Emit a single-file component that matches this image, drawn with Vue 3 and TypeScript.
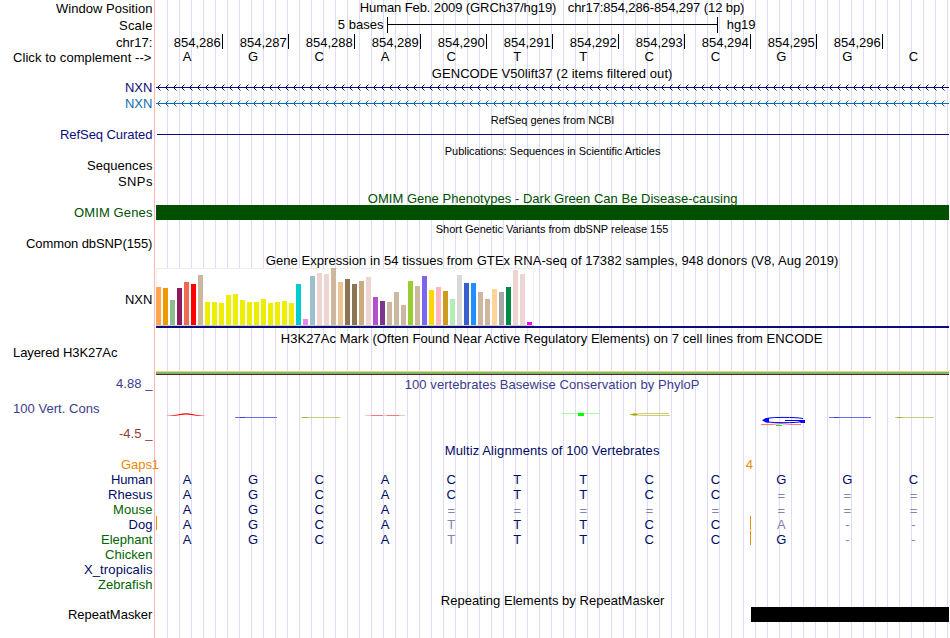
<script setup lang="ts">
interface Label { text: string; left: number; right: number; base: number; color?: string; small?: boolean }
interface Row { id: string; height: number; labels?: Label[]; titles?: Label[] }
interface PlacedRow extends Row { top: number }

const NAVY = '#0c0c78'
const ALIGN = '#000a64'
const GREEN = '#006400'
const CONS = '#3c3c8c'
const OMIM = '#005000'
const GAP = '#e68a0a'

const l = (text: string, left: number, right: number, base: number, color = '#000', small = false): Label =>
  ({ text, left, right, base, color, small })

const rows: Row[] = [
  { id: 'position', height: 16, labels: [l('Window Position', 56, 152, 13)], titles: [l('Human Feb. 2009 (GRCh37/hg19)', 360, 556, 12), l('chr17:854,286-854,297 (12 bp)', 568, 744, 12)] },
  { id: 'scale', height: 17, labels: [l('Scale', 119, 152, 30)], titles: [l('5 bases', 338, 383, 29), l('hg19', 727, 755, 29)] },
  { id: 'ruler', height: 17, labels: [l('chr17:', 116, 152, 47)] },
  { id: 'bases', height: 15, labels: [l('Click to complement -->', 13, 151, 62)] },
  { id: 'gencode-title', height: 15, titles: [l('GENCODE V50lift37 (2 items filtered out)', 432, 672, 78)] },
  { id: 'gene-a', height: 16, labels: [l('NXN', 125, 152, 92, NAVY)] },
  { id: 'gene-b', height: 16, labels: [l('NXN', 125, 152, 108, '#0e6eb4')] },
  { id: 'refseq-title', height: 15, titles: [l('RefSeq genes from NCBI', 491, 614, 124, '#000', true)] },
  { id: 'refseq', height: 16, labels: [l('RefSeq Curated', 60, 152, 139, NAVY)] },
  { id: 'pubs-title', height: 15, titles: [l('Publications: Sequences in Scientific Articles', 445, 660, 155, '#000', true)] },
  { id: 'sequences', height: 16, labels: [l('Sequences', 87, 152, 170)] },
  { id: 'snps', height: 16, labels: [l('SNPs', 118, 152, 186)] },
  { id: 'omim-title', height: 15, titles: [l('OMIM Gene Phenotypes - Dark Green Can Be Disease-causing', 368, 737, 203, OMIM)] },
  { id: 'omim', height: 15, labels: [l('OMIM Genes', 74, 152, 217, OMIM)] },
  { id: 'dbsnp-title', height: 16, titles: [l('Short Genetic Variants from dbSNP release 155', 436, 668, 233, '#000', true)] },
  { id: 'dbsnp', height: 16, labels: [l('Common dbSNP(155)', 26, 152, 248)] },
  { id: 'gtex-title', height: 16, titles: [l('Gene Expression in 54 tissues from GTEx RNA-seq of 17382 samples, 948 donors (V8, Aug 2019)', 266, 838, 265)] },
  { id: 'gtex', height: 62, labels: [l('NXN', 125, 152, 304)] },
  { id: 'h3k-title', height: 16, titles: [l('H3K27Ac Mark (Often Found Near Active Regulatory Elements) on 7 cell lines from ENCODE', 281, 822, 343)] },
  { id: 'h3k', height: 30, labels: [l('Layered H3K27Ac', 13, 117, 357)] },
  { id: 'cons-title', height: 16, labels: [l('4.88 _', 116, 152, 388, CONS)], titles: [l('100 vertebrates Basewise Conservation by PhyloP', 405, 699, 389, CONS)] },
  { id: 'cons', height: 50, labels: [l('100 Vert. Cons', 13, 99, 413, CONS), l('-4.5 _', 119, 152, 438, '#8c3c3c')] },
  { id: 'multiz-title', height: 16, titles: [l('Multiz Alignments of 100 Vertebrates', 445, 659, 455, ALIGN)] },
  { id: 'gaps', height: 14, labels: [l('Gaps', 121, 151.5, 469, GAP)] },
  { id: 'human', height: 15, labels: [l('Human', 111, 152, 484, ALIGN)] },
  { id: 'rhesus', height: 15, labels: [l('Rhesus', 108, 152, 499, ALIGN)] },
  { id: 'mouse', height: 15, labels: [l('Mouse', 113, 152, 514, GREEN)] },
  { id: 'dog', height: 15, labels: [l('Dog', 128.5, 152, 529, ALIGN)] },
  { id: 'elephant', height: 15, labels: [l('Elephant', 101, 152, 544, GREEN)] },
  { id: 'chicken', height: 15, labels: [l('Chicken', 105, 152, 559, GREEN)] },
  { id: 'xtropicalis', height: 15, labels: [l('X_tropicalis', 84, 152, 574, ALIGN)] },
  { id: 'zebrafish', height: 15, labels: [l('Zebrafish', 98, 152, 589, GREEN)] },
  { id: 'rmsk-title', height: 15, titles: [l('Repeating Elements by RepeatMasker', 441, 664, 605)] },
  { id: 'rmsk', height: 31, labels: [l('RepeatMasker', 68, 152, 619)] },
]

let cursor = 0
const placed: PlacedRow[] = rows.map((row) => {
  const top = cursor
  cursor += row.height
  return { ...row, top }
})

const bases = 'AGCACTTCCGGC'.split('')
const alignments: Record<string, string> = {
  human: 'AGCACTTCCGGC',
  rhesus: 'AGCACTTCC===',
  mouse: 'AGCA========',
  dog: 'AGCAtTTCCa--',
  elephant: 'AGCAtTTCCG--',
}
const centre = (i: number): number => 187.1 + 66.03 * i
const isMatch = (ch: string): boolean => /[A-Z]/.test(ch)
const ticks = Array.from({ length: 11 }, (_, i) => ({ x: 222 + 66 * i, text: `854,${286 + i}` }))

const arrows = (y: number): string =>
  Array.from({ length: 99 }, (_, i) => {
    const x = 157.5 + 8 * i
    return `M${x + 3} ${y - 3}L${x} ${y}L${x + 3} ${y + 3}`
  }).join('')

const heights = [
  38, 37, 25, 37, 43, 41, 50, 23, 23, 22, 30, 31, 25, 23, 23, 26, 22, 23, 24, 22, 41, 6, 49, 52, 51, 57, 43,
  46, 41, 44, 48, 28, 24, 23, 33, 20, 44, 39, 49, 35, 38, 34, 26, 50, 42, 42, 33, 26, 36, 33, 38, 55, 51, 3,
]
const colors = [
  '#ffa54f', '#ee9a00', '#8fbc8f', '#8b1c62', '#ee6a50', '#ff0000', '#cdb79e',
  ...Array<string>(13).fill('#eeee00'),
  '#00cdcd', '#ee82ee', '#9ac0cd', '#eed5d2', '#eed5d2', '#cdb79e', '#eec591', '#8b7355', '#8b7355', '#cdaa7d',
  '#eed5d2', '#b452cd', '#7a378b', '#cdb79e', '#cdb79e', '#cdb79e', '#9acd32', '#cdb79e', '#7a67ee', '#ffd700',
  '#ffb6c1', '#cd9b1d', '#b4eeb4', '#d9d9d9', '#3a5fcd', '#1e90ff', '#cdb79e', '#cdb79e', '#ffd39b', '#a6a6a6',
  '#008b45', '#eed5d2', '#eed5d2', '#ff00ff',
]
const tissues = heights.map((h, i) => ({ x: 156 + 7 * i, h, color: colors[i] }))
</script>

<template>
  <main class="browser">
    <section v-for="row in placed" :key="row.id" class="row">
      <svg class="side" width="155" :height="row.height" :viewBox="`0 ${row.top} 155 ${row.height}`">
        <text
          v-for="t in row.labels" :key="t.text" :x="t.left" :y="t.base" :fill="t.color"
          :textLength="t.right - t.left + 0.4"
        >{{ t.text }}</text>
      </svg>
      <svg class="track" width="794" :height="row.height" :viewBox="`155 ${row.top} 794 ${row.height}`">
        <g v-if="row.id === 'scale'" class="crisp">
          <rect x="387" y="17" width="1" height="16" />
          <rect x="717" y="17" width="1" height="16" />
          <rect x="387" y="24" width="331" height="1" />
        </g>

        <g v-else-if="row.id === 'ruler'">
          <template v-for="t in ticks" :key="t.x">
            <text :x="t.x - 48.3" y="47" textLength="47">{{ t.text }}</text>
            <rect class="crisp" :x="t.x" y="34" width="1" height="15" />
          </template>
        </g>

        <g v-else-if="row.id === 'bases'" class="letters">
          <text v-for="(b, i) in bases" :key="i" :x="centre(i)" y="61">{{ b }}</text>
        </g>

        <g v-else-if="row.id === 'gene-a'" class="gene gene-dark">
          <path class="crisp" d="M156 87.5H949" />
          <path :d="arrows(87.5)" />
        </g>

        <g v-else-if="row.id === 'gene-b'" class="gene gene-light">
          <path class="crisp" d="M156 103.5H949" />
          <path :d="arrows(103.5)" />
        </g>

        <rect v-else-if="row.id === 'refseq'" x="157" y="134" width="792" height="1" fill="#0c0c78" />
        <rect v-else-if="row.id === 'omim'" x="156" y="205" width="793" height="15" fill="#005000" />

        <g v-else-if="row.id === 'gtex'" class="crisp">
          <rect x="156" y="268" width="378" height="58" fill="#eee" />
          <rect x="157" y="269" width="376" height="56" fill="#fff" />
          <rect x="156" y="325" width="378" height="1" fill="#ccc" />
          <rect v-for="t in tissues" :key="t.x" :x="t.x" :y="325 - t.h" width="5" :height="t.h" :fill="t.color" />
          <rect x="156" y="326" width="793" height="2" fill="#0c0c78" />
        </g>

        <g v-else-if="row.id === 'h3k'" class="crisp">
          <rect x="156" y="371" width="793" height="1" fill="#ecd47c" />
          <rect x="156" y="372" width="793" height="2" fill="#74bc60" />
          <rect x="156" y="374" width="793" height="1" fill="#5c1c34" />
        </g>

        <g v-else-if="row.id === 'cons'" class="logo">
          <path d="M166 415.8Q176 415.3 180 414Q186 412.7 192 414Q196 415.3 206 415.8Q198 416.2 191 415Q186 413.9 181 415Q174 416.2 166 415.8Z" fill="#f00" />
          <rect x="235" y="417" width="42" height="1" fill="#6c6cf0" />
          <rect x="240" y="417" width="5" height="1" fill="#3c3cd8" />
          <rect x="301" y="417" width="39" height="1" fill="#cccc80" />
          <rect x="303" y="417" width="5" height="1" fill="#acac3c" />
          <rect x="365" y="415" width="40" height="1" fill="#fac0c0" />
          <rect x="371" y="415" width="12" height="1" fill="#f47878" />
          <rect x="387" y="415" width="12" height="1" fill="#f47878" />
          <rect x="562" y="413" width="38" height="1" fill="#a8f8a8" />
          <rect x="578" y="413" width="6" height="3" fill="#0f0" />
          <path d="M632 414.5Q637 413.5 646 413.5H669M632 414.5Q637 415.5 646 415.5H670" class="olive" />
          <path d="M629 414.5L635 413.2L638 414.5L635 415.8Z" fill="#a6a600" />
          <path d="M761 424.6H769Q781 422.6 793 424.6H801" class="red-arc" />
          <rect x="776" y="425" width="6" height="1" fill="#0e0" />
          <path d="M803 418.5Q797 417.4 783 417.4Q764 417.4 764 420.2Q764 422.7 783 422.7Q798 422.7 802 421.5M785 420.5H803" class="blue" />
          <path d="M762 420.2L766 418H769V422.5H766ZM799 420H805V423H802Q799 422.5 799 420Z" fill="#00f" />
          <rect x="829" y="417" width="42" height="1" fill="#6c6cf0" />
          <rect x="834" y="417" width="5" height="1" fill="#3c3cd8" />
          <rect x="895" y="417" width="39" height="1" fill="#cccc80" />
          <rect x="897" y="417" width="5" height="1" fill="#acac3c" />
        </g>

        <g v-else-if="row.id === 'gaps'" class="gap-count">
          <text x="151.7" y="469">1</text>
          <text x="745.8" y="469">4</text>
        </g>

        <g v-else-if="alignments[row.id]" class="letters">
          <rect v-if="row.id === 'dog'" class="gap-bar" x="156" y="516" width="1" height="14" />
          <rect v-if="row.id === 'dog'" class="gap-bar" x="750" y="516" width="1" height="14" />
          <rect v-if="row.id === 'elephant'" class="gap-bar" x="750" y="531" width="1" height="14" />
          <text
            v-for="(ch, i) in alignments[row.id].split('')" :key="i" :x="centre(i)"
            :y="row.top + (ch === '=' ? 13 : 12)" :class="isMatch(ch) ? 'match' : 'mismatch'"
          >{{ ch.toUpperCase() }}</text>
        </g>

        <rect v-else-if="row.id === 'rmsk'" x="751" y="607" width="198" height="15" />

        <text
          v-for="t in row.titles" :key="t.text" :x="t.left - 0.2" :y="t.base" :fill="t.color"
          :class="{ small: t.small }" :textLength="t.right - t.left + 0.6"
        >{{ t.text }}</text>
      </svg>
    </section>
  </main>
</template>

<style>
body { margin: 0; background: #fff; }
</style>

<style scoped>
.browser {
  width: 950px;
  height: 638px;
  overflow: hidden;
  background:
    linear-gradient(#ffb4b4, #ffb4b4) 154px 0 / 1px 100% no-repeat,
    repeating-linear-gradient(90deg, #dcdcf8 0 1px, transparent 1px 12px) 167px 0 / 782px 100% no-repeat,
    #fff;
}
.row { display: flex; }
.row svg { display: block; flex: none; overflow: visible; }
text { font-family: "Liberation Sans", Arial, sans-serif; font-size: 13px; white-space: pre; }
.small { font-size: 11px; }
.letters text { text-anchor: middle; }
.match { fill: #000a64; }
.mismatch { fill: #8085b2; }
.crisp { shape-rendering: crispEdges; }
.gene path { fill: none; stroke-width: 1; }
.gene-dark path { stroke: #0c0c78; }
.gene-light path { stroke: #0e6eb4; }
.gap-count text { fill: #e68a0a; }
.gap-bar { fill: #e68a0a; }
.olive { fill: none; stroke: #c0c050; stroke-width: 0.8; }
.red-arc { fill: none; stroke: #ff3030; stroke-width: 0.7; }
.blue { fill: none; stroke: #00f; stroke-width: 1; }
</style>
